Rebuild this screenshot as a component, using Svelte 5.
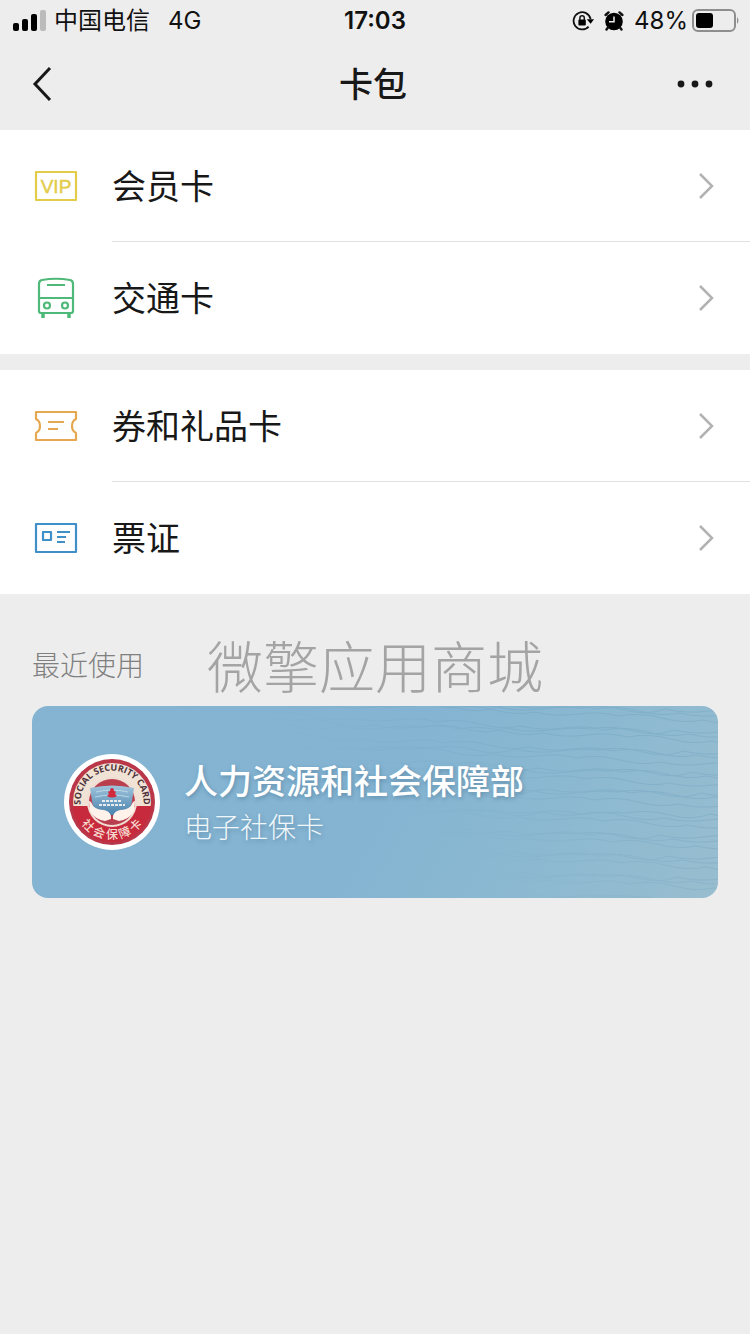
<script>
  const groups = [
    [
      { id: 'vip', label: '会员卡' },
      { id: 'bus', label: '交通卡' }
    ],
    [
      { id: 'coupon', label: '券和礼品卡' },
      { id: 'ticket', label: '票证' }
    ]
  ];

  // Fine ripples that fade in toward the right side of the card
  const waves = Array.from({ length: 32 }, (_, i) => {
    const y = i * 7 - 24;
    const shift = (i * 37) % 60;
    let d = `M${180 - shift} ${y}`;
    for (let k = 0; k < 8; k++) {
      d += ` q 22 ${k % 2 ? -4 : 5} 44 2 t 40 ${i % 3 ? 2 : -1}`;
    }
    return d;
  });
</script>

<div class="page">
  <div class="status">
    <div class="side">
      <svg class="signal" viewBox="0 0 34 22" aria-hidden="true">
        <rect x="1" y="13" width="6" height="8" rx="2" />
        <rect x="10" y="9" width="6" height="12" rx="2" />
        <rect x="19" y="4" width="6" height="17" rx="2" />
        <rect x="28" y="0" width="6" height="21" rx="2" fill="#bbb" />
      </svg>
      <span class="carrier">中国电信</span>
      <span class="net">4G</span>
    </div>
    <time>17:03</time>
    <div class="side right">
      <svg class="lock" viewBox="0 0 22 22" aria-hidden="true">
        <path d="M16.6 16.6A8.6 8.6 0 1 1 18.6 9" fill="none" stroke="#111" stroke-width="1.8" />
        <path d="M14.8 9.2h7.2l-3.4 4.6z" />
        <rect x="6.4" y="9.6" width="7.4" height="6" rx="1" />
        <path d="M7.9 10V8a2.2 2.2 0 0 1 4.4 0v2" fill="none" stroke="#111" stroke-width="1.5" />
      </svg>
      <svg class="alarm" viewBox="0 0 20 20" aria-hidden="true">
        <circle cx="10" cy="10.5" r="8.8" />
        <path d="M1.6 4L4.500 1.400M18.400 4L15.500 1.400M4 16.500l-1.500 2M16 16.500l1.500 2" stroke="#111" stroke-width="2.4" stroke-linecap="round" />
        <path d="M10 5.4v5.4H5" fill="none" stroke="#eee" stroke-width="1.5" />
      </svg>
      <span>48%</span>
      <svg class="battery" viewBox="0 0 48 24" aria-hidden="true">
        <rect x="1" y="1" width="42" height="21" rx="5" fill="none" stroke="#8e8e8e" stroke-width="2" />
        <rect x="4" y="4" width="17" height="15" rx="3" fill="#000" />
        <path d="M45 8q3 3.5 0 7z" fill="#8e8e8e" />
      </svg>
    </div>
  </div>

  <header>
    <button class="back" aria-label="返回">
      <svg viewBox="0 0 20 36" aria-hidden="true"><path d="M18 2L3 18l15 16" /></svg>
    </button>
    <h1>卡包</h1>
    <button class="more" aria-label="更多">
      <svg viewBox="0 0 36 8" aria-hidden="true">
        <circle cx="4" cy="4" r="3.400" /><circle cx="18" cy="4" r="3.400" /><circle cx="32" cy="4" r="3.400" />
      </svg>
    </button>
  </header>

  <main>
    {#each groups as group}
      <nav class="group">
        {#each group as item}
          <a class="row" href="#{item.id}">
            <svg class="icon {item.id}" viewBox="0 0 48 48" aria-hidden="true">
              {#if item.id === 'vip'}
                <rect x="4" y="10" width="40" height="28" />
                <text x="24" y="31" text-anchor="middle">VIP</text>
              {:else if item.id === 'bus'}
                <path d="M7 37V10q0-3.500 3-4Q24 3.500 38 6q3 .5 3 4v27q0 2-2 2H9q-2 0-2-2zM7 24h34M15 11h18" />
                <path d="M11 39v5M37 39v5" stroke-width="3.500" />
                <circle cx="15" cy="31.500" r="3" /><circle cx="33" cy="31.500" r="3" />
              {:else if item.id === 'coupon'}
                <path d="M4 10h40v7q-4 2-4 7t4 7v7H4v-7q4-2 4-7t-4-7zM16 20h16M16 27h10" />
              {:else}
                <rect x="4" y="10" width="40" height="28" />
                <rect x="11" y="18" width="8" height="8" />
                <path d="M25 18h13M25 23h9M25 28h8" />
              {/if}
            </svg>
            <span class="cell">
              <span>{item.label}</span>
              <svg class="chevron" viewBox="0 0 16 28" aria-hidden="true"><path d="M2 2l12 12L2 26" /></svg>
            </span>
          </a>
        {/each}
      </nav>
    {/each}

    <section>
      <div class="heading">
        <h2>最近使用</h2>
        <span class="mark">微擎应用商城</span>
      </div>
      <a class="card" href="#social">
        <svg class="waves" viewBox="0 0 686 192" preserveAspectRatio="none" aria-hidden="true">
          <defs>
            <linearGradient id="fade" x1="0" y1=".4" x2="1" y2="0">
              <stop offset=".4" stop-color="#000" />
              <stop offset=".75" stop-color="#fff" />
            </linearGradient>
            <mask id="ripple"><rect width="686" height="192" fill="url(#fade)" /></mask>
          </defs>
          <g mask="url(#ripple)">
            {#each waves as d}<path {d} />{/each}
          </g>
        </svg>
        <svg class="badge" viewBox="0 0 96 96" aria-hidden="true">
          <defs>
            <path id="arcTop" d="M17.500 56A31.500 31.500 0 1 1 78.500 56" />
            <path id="arcBottom" d="M11 56A38 38 0 0 0 85 56" />
            <clipPath id="disc"><circle cx="48" cy="48" r="40" /></clipPath>
            <linearGradient id="globe" x1="0" y1="0" x2="0" y2="1">
              <stop offset="0" stop-color="#9fc4dc" />
              <stop offset="1" stop-color="#4a83ad" />
            </linearGradient>
          </defs>
          <circle cx="48" cy="48" r="48" fill="#fff" />
          <circle cx="48" cy="48" r="43" fill="#b93748" />
          <circle cx="48" cy="48" r="39" fill="#f0e2d5" />
          <path d="M5 52h86v40H5z" fill="#c72a3c" clip-path="url(#disc)" />
          <circle cx="48" cy="48" r="25" fill="#f0ddd4" />
          <circle cx="48" cy="48" r="23" fill="#b93f4e" />
          <path d="M26 34Q48 29 70 34l-3 19q-7 8-19 8t-19-8z" fill="url(#globe)" />
          <path d="M32 38q16-4 32 0M31 43q17-4 34 0" fill="none" stroke="#bcd8e7" stroke-width="1" />
          <path d="M45 40q-2-3 1-3 0-3 2-3t2 3q3 0 1 3l2 2q-5 3-10 0z" fill="#d12a3d" />
          <path d="M38 47h20M35 51h26" stroke="#e5edf0" stroke-width="2" stroke-dasharray="3 1" />
          <path d="M25 47q2 0 4 5 4 4 11 4 8 2 7 9l-6 2q-11-2-15-10zM71 47q-2 0-4 5-4 4-11 4-8 2-7 9l6 2q11-2 15-10z" fill="#fff2eb" />
          <text class="arc-en"><textPath href="#arcTop" startOffset="50%" text-anchor="middle">SOCIAL SECURITY CARD</textPath></text>
          <text class="arc-zh"><textPath href="#arcBottom" startOffset="50%" text-anchor="middle">社 会 保 障 卡</textPath></text>
        </svg>
        <span class="info">
          <strong>人力资源和社会保障部</strong>
          <span>电子社保卡</span>
        </span>
      </a>
    </section>
  </main>
</div>

<style>
  :global(body) {
    background: #ededed;
  }
  .page {
    font-family: Inter, "Noto Sans CJK SC", sans-serif;
    color: #181818;
    min-height: 100vh;
    background: #ededed;
  }
  svg {
    display: block;
    flex: none;
  }
  .status {
    height: 40px;
    display: grid;
    grid-template-columns: 1fr auto 1fr;
    align-items: center;
    padding: 1px 12px 0;
    box-sizing: border-box;
    font-size: 24px;
    line-height: 40px;
    color: #111;
  }
  .side {
    display: flex;
    align-items: center;
    gap: 8px;
  }
  .right {
    justify-content: flex-end;
    gap: 10px;
  }
  .signal {
    width: 34px;
    height: 22px;
  }
  .net {
    margin-left: 10px;
  }
  time {
    font-weight: 600;
  }
  .lock {
    width: 22px;
    height: 22px;
  }
  .alarm {
    width: 20px;
    height: 20px;
  }
  .battery {
    width: 48px;
    height: 24px;
    margin: 0 -2px 0 -6px;
  }
  header {
    height: 90px;
    display: grid;
    grid-template-columns: 1fr auto 1fr;
    align-items: center;
    padding: 0 36px 0 32px;
    box-sizing: border-box;
  }
  button {
    border: 0;
    padding: 0 0 2px;
    background: none;
    width: 44px;
    height: 44px;
    display: flex;
    align-items: center;
  }
  .more {
    justify-content: flex-end;
    justify-self: end;
  }
  .back svg {
    width: 20px;
    height: 36px;
    fill: none;
    stroke: #181818;
    stroke-width: 3;
  }
  .more svg {
    width: 38px;
    height: 8px;
    fill: #181818;
  }
  h1 {
    margin: 0;
    font-size: 34px;
    font-weight: 500;
    line-height: 48px;
  }
  .group {
    background: #fff;
    margin-bottom: 16px;
  }
  .row {
    display: flex;
    align-items: center;
    height: 112px;
    padding-left: 32px;
    gap: 32px;
    font-size: 34px;
    line-height: 48px;
    color: #181818;
    text-decoration: none;
  }
  .cell {
    flex: 1;
    height: 112px;
    box-sizing: border-box;
    display: flex;
    align-items: center;
    justify-content: space-between;
    padding-right: 36px;
  }
  .cell span {
    padding-top: 2px;
  }
  .row:not(:last-child) .cell {
    border-bottom: 1px solid #e2e2e2;
  }
  .chevron {
    width: 16px;
    height: 28px;
    fill: none;
    stroke: #b2b2b2;
    stroke-width: 2.5;
  }
  .icon {
    width: 48px;
    height: 48px;
    fill: none;
    stroke-width: 2.2;
    stroke-linejoin: round;
  }
  .vip {
    stroke: #e3cc4a;
  }
  .vip text {
    font: 500 19px "Liberation Sans", sans-serif;
    fill: #e3cc4a;
    stroke: #e3cc4a;
    stroke-width: 0.5;
  }
  .bus {
    stroke: #4fb979;
  }
  .coupon {
    stroke: #e5a850;
  }
  .ticket {
    stroke: #3f8fc8;
  }
  section {
    padding: 22px 32px 0;
  }
  .heading {
    position: relative;
    height: 64px;
    margin-bottom: 10px;
    display: flex;
    align-items: center;
  }
  h2 {
    margin: 0;
    font-size: 28px;
    font-weight: 300;
    color: #808080;
  }
  .mark {
    position: absolute;
    inset: 0;
    text-align: center;
    font-size: 56px;
    font-weight: 300;
    line-height: 72px;
    color: #a4a4a4;
    pointer-events: none;
  }
  .card {
    position: relative;
    display: flex;
    align-items: center;
    gap: 24px;
    height: 192px;
    box-sizing: border-box;
    padding: 0 32px;
    border-radius: 16px;
    overflow: hidden;
    background: linear-gradient(120deg, #84b4d2 0%, #84b4d2 50%, #8cb9d1 75%, #98bdcf 100%);
    color: #fff;
    text-decoration: none;
  }
  .waves {
    position: absolute;
    inset: 0;
    width: 100%;
    height: 100%;
    fill: none;
    stroke: #6d9fbd;
    stroke-width: 1;
    opacity: 0.35;
  }
  .badge {
    position: relative;
    width: 96px;
    height: 96px;
  }
  .arc-en {
    font: 700 9px "Open Sans", sans-serif;
    fill: #4d3038;
  }
  .arc-zh {
    font: 500 12px "Noto Sans CJK SC", sans-serif;
    fill: #f6d9cf;
  }
  .info {
    position: relative;
    display: flex;
    flex-direction: column;
    padding-top: 4px;
    text-shadow: 1px 2px 4px rgba(50, 90, 120, 0.4);
  }
  strong {
    font-size: 34px;
    font-weight: 500;
    line-height: 48px;
  }
  .info span {
    font-size: 28px;
    font-weight: 300;
    line-height: 44px;
    color: #f0f7fa;
  }
</style>
